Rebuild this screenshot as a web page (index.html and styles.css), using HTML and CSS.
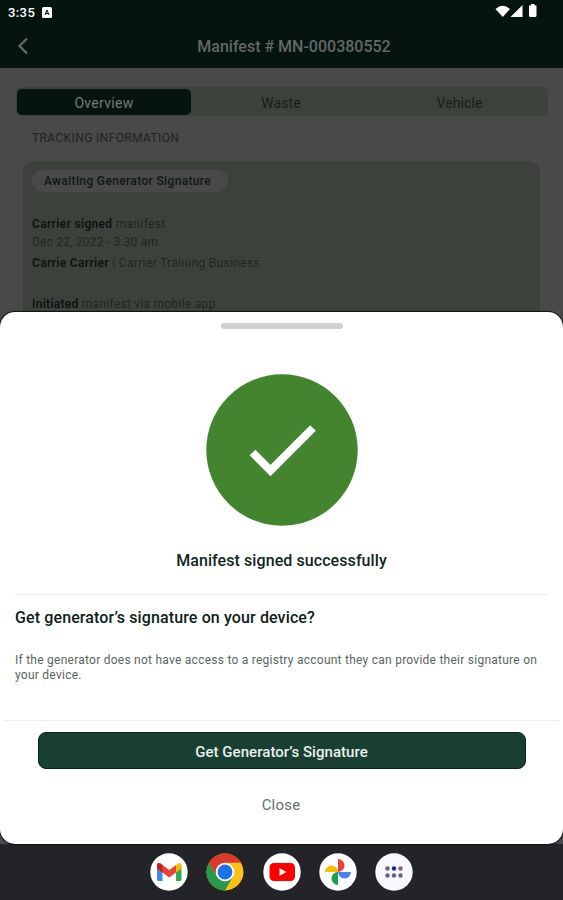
FILE: index.html
```
<!DOCTYPE html>
<html lang="en">
<head>
    <meta charset="UTF-8">
    <meta name="viewport" content="width=device-width, initial-scale=1.0">
    <title>Manifest # MN-000380552</title>
    <link rel="stylesheet" href="styles.css">
</head>
<body>
    <div class="screen">
        <header class="header">
            <div class="status-bar">
                <span class="clock">3:35</span>
                <svg class="app-badge" width="10" height="11" viewBox="0 0 10 11">
                    <rect width="10" height="11" rx="1.5" fill="#fff"/>
                    <path d="M3 8 5 3 7 8M3.8 6.5H6.2" fill="none" stroke="#06140f" stroke-width="1"/>
                </svg>
                <svg class="status-icons" width="44" height="16" viewBox="0 0 44 16" fill="#fff">
                    <path d="M0.5 6Q7.500 -0.500 15 6L7.700 14Z"/>
                    <path d="M27.500 2V14H15.500Z"/>
                    <path d="M34 2.500H36V1H39.500V2.500H41.500V12.500Q41.500 14 40 14H35.500Q34 14 34 12.500Z"/>
                </svg>
            </div>
            <div class="nav-bar">
                <svg class="back" width="12" height="18" viewBox="0 0 12 18">
                    <path d="M10 1.500 2.500 9 10 16.500" fill="none" stroke="#626865" stroke-width="2.300"/>
                </svg>
                <h1 class="title">Manifest # MN-000380552</h1>
            </div>
        </header>

        <main class="content">
            <div class="tabs">
                <div class="tab active">Overview</div>
                <div class="tab">Waste</div>
                <div class="tab">Vehicle</div>
            </div>
            <h2 class="section-title">TRACKING INFORMATION</h2>
            <div class="card">
                <span class="pill">Awaiting Generator Signature</span>
                <p class="line signed"><b>Carrier signed</b> manifest</p>
                <p class="line when">Dec 22, 2022 - 3:30 am</p>
                <p class="line who"><b>Carrie Carrier</b> | Carrier Training Business</p>
                <p class="line initiated"><b>Initiated</b> manifest via mobile app</p>
            </div>
        </main>

        <section class="sheet">
            <div class="handle"></div>
            <svg class="success" width="152" height="152" viewBox="0 0 152 152">
                <circle cx="76" cy="76" r="75.700" fill="#43852e"/>
                <path d="M46.500 78.500 64.500 96.500 107 54" fill="none" stroke="#fff" stroke-width="8"/>
            </svg>
            <p class="message">Manifest signed successfully</p>
            <div class="question">
                <h3 class="question-title">Get generator’s signature on your device?</h3>
                <p class="question-text">If the generator does not have access to a registry account they can provide their signature on<br>your device.</p>
            </div>
            <div class="actions">
                <button class="primary">Get Generator’s Signature</button>
                <button class="close">Close</button>
            </div>
        </section>

        <nav class="dock">
            <!-- Gmail -->
            <svg width="38" height="38" viewBox="0 0 38 38">
                <circle cx="19" cy="19" r="18.700" fill="#fff"/>
                <path d="M7 13V26.500Q7 28 8.500 28H12.500V17Z" fill="#4285f4"/>
                <path d="M31.500 13V26.500Q31.500 28 30 28H26V17Z" fill="#34a853"/>
                <path d="M26 12 28 10.500Q31.500 9 31.500 13V15.500L26 19.500Z" fill="#fbbc04"/>
                <path d="M7 15.500V13Q7 9 10.500 10.500L19.200 17 26 12V19.500L19.200 24.500 12.500 19.500Z" fill="#ea4335"/>
                <path d="M7 15.500V13Q7 9 10.500 10.500L12.500 12V19.500Z" fill="#c5221f"/>
            </svg>
            <!-- Chrome -->
            <svg width="38" height="38" viewBox="0 0 38 38">
                <circle cx="19" cy="19" r="18.500" fill="#fbc116"/>
                <path d="M2.980 9.750A18.500 18.500 0 0 0 19 37.500L27.010 23.620 19 19 10.990 23.620Z" fill="#26994a"/>
                <path d="M2.980 9.750A18.500 18.500 0 0 1 35.020 9.750H19L10.990 23.620Z" fill="#d93a2c"/>
                <circle cx="19" cy="19" r="9.300" fill="#fff"/>
                <circle cx="19" cy="19" r="7.400" fill="#1a73e8"/>
            </svg>
            <!-- YouTube -->
            <svg width="38" height="38" viewBox="0 0 38 38">
                <circle cx="19" cy="19" r="18.700" fill="#fff"/>
                <rect x="6.500" y="10" width="25.500" height="18" rx="4.500" fill="#f00"/>
                <path d="M16.500 15.200 23.500 19 16.500 22.800Z" fill="#fff"/>
            </svg>
            <!-- Photos -->
            <svg width="38" height="38" viewBox="0 0 38 38">
                <circle cx="19" cy="19" r="18.700" fill="#fff"/>
                <path d="M19 19V6A6.500 6.500 0 0 1 19 19Z" fill="#ea4335"/>
                <path d="M19 19H32A6.500 6.500 0 0 1 19 19Z" fill="#4285f4"/>
                <path d="M19 19V32A6.500 6.500 0 0 1 19 19Z" fill="#1e9e4a"/>
                <path d="M19 19H6A6.500 6.500 0 0 1 19 19Z" fill="#fbbc04"/>
            </svg>
            <!-- All apps -->
            <svg width="38" height="38" viewBox="0 0 38 38">
                <circle cx="19" cy="19" r="18.700" fill="#f8f7fd"/>
                <g fill="#66627f">
                    <circle cx="12.500" cy="15.500" r="2.200"/>
                    <circle cx="19" cy="15.500" r="2.200" fill="#26267d"/>
                    <circle cx="25.500" cy="15.500" r="2.200" fill="#806477"/>
                    <circle cx="12.500" cy="22.500" r="2.200"/>
                    <circle cx="19" cy="22.500" r="2.200"/>
                    <circle cx="25.500" cy="22.500" r="2.200"/>
                </g>
            </svg>
        </nav>
    </div>
</body>
</html>
```
FILE: styles.css
```
* {
    box-sizing: border-box;
}
body {
    margin: 0;
    font-family: Roboto, "Liberation Sans", sans-serif;
    overflow: hidden;
}
h1, h2, h3, p {
    margin: 0;
}
.screen {
    position: relative;
    display: flex;
    flex-direction: column;
    width: 563px;
    height: 900px;
    background-color: #494949;
}
.header {
    height: 68px;
    background-color: #06140f;
}
.status-bar {
    display: flex;
    align-items: center;
    height: 24px;
    padding: 0 20px 0 8px;
}
.clock {
    width: 34px;
    color: #ffffff;
    font-size: 13px;
    font-weight: 500;
    letter-spacing: 0.4px;
}
.status-icons {
    margin: -2px 4px 0 auto;
}
.nav-bar {
    display: grid;
    grid-template-columns: 40px 1fr 15px;
    align-items: center;
    height: 43px;
}
.back {
    margin-left: 17px;
}
.title {
    padding-top: 1px;
    color: #626865;
    font-size: 16px;
    font-weight: 500;
    text-align: center;
}
.content {
    flex: 1;
    padding: 19px 15px 0 16px;
}
.tabs {
    display: grid;
    grid-template-columns: 175px 1fr 177px;
    grid-template-rows: 29px;
    height: 29px;
    background-color: #3d413c;
    border-radius: 6px;
}
.tab {
    color: #151f1a;
    font-size: 14px;
    letter-spacing: 0.1px;
    line-height: 32px;
    text-align: center;
}
.active {
    margin: 2px 0 1px 1px;
    background-color: #06140f;
    border-radius: 5px;
    color: #757b78;
    letter-spacing: 0.3px;
    line-height: 28px;
}
.section-title {
    margin: 14px 0 0 16px;
    color: #1e2421;
    font-size: 12px;
    font-weight: 400;
    letter-spacing: 0.38px;
    line-height: 16px;
}
.card {
    height: 240px;
    margin: 15px 8px 0 7px;
    padding: 9px 9px 0;
    background-color: #3d413c;
    border-radius: 12px;
}
.pill {
    display: block;
    width: 196px;
    height: 22px;
    padding-left: 12px;
    background-color: #494949;
    border-radius: 11px;
    color: #101814;
    font-size: 12px;
    font-weight: 500;
    letter-spacing: 0.35px;
    line-height: 22px;
}
.line {
    color: #202722;
    font-size: 12px;
    letter-spacing: 0.33px;
    line-height: 18px;
}
.line b {
    color: #0a1410;
    font-weight: 600;
}
.signed {
    margin-top: 23px;
}
.when {
    letter-spacing: 0.2px;
}
.who {
    margin-top: 3px;
}
.initiated {
    margin-top: 23px;
    letter-spacing: 0.27px;
}
.sheet {
    position: absolute;
    top: 312px;
    left: 0;
    display: flex;
    flex-direction: column;
    align-items: center;
    width: 563px;
    height: 532px;
    background-color: #ffffff;
    border-radius: 15px;
    box-shadow: 0 0 1px 1px #101211;
}
.handle {
    width: 122px;
    height: 6px;
    margin-top: 11px;
    background-color: #d0d0d0;
    border-radius: 3px;
}
.success {
    margin-top: 45px;
}
.message {
    margin-top: 25px;
    color: #10261d;
    font-size: 16px;
    font-weight: 500;
    letter-spacing: 0.08px;
    line-height: 20px;
}
.question {
    width: 533px;
    height: 126px;
    margin-top: 23px;
    padding-top: 13px;
    border-top: 1px solid #ececec;
}
.question-title {
    color: #0c1f17;
    font-size: 16px;
    font-weight: 500;
    letter-spacing: 0.12px;
    line-height: 20px;
}
.question-text {
    margin-top: 25px;
    color: #59665f;
    font-size: 12px;
    letter-spacing: 0.25px;
    line-height: 15px;
    white-space: nowrap;
}
.actions {
    display: flex;
    flex-direction: column;
    align-items: center;
    width: 555px;
    padding-top: 11px;
    border-top: 1px solid #ececec;
}
.primary {
    width: 488px;
    height: 37px;
    padding: 2px 0 0;
    background-color: #193f33;
    border: 1px solid #0b241b;
    border-radius: 8px;
    color: #e9efec;
    font-family: inherit;
    font-size: 15px;
    font-weight: 500;
    letter-spacing: 0.05px;
}
.close {
    margin-top: 26px;
    padding: 0 1px 0 0;
    background: none;
    border: none;
    color: #65706b;
    font-family: inherit;
    font-size: 15px;
    letter-spacing: 0.2px;
    line-height: 20px;
}
.dock {
    display: flex;
    justify-content: center;
    gap: 18.3px;
    height: 56px;
    padding-top: 9px;
    background-color: #232428;
}
```
